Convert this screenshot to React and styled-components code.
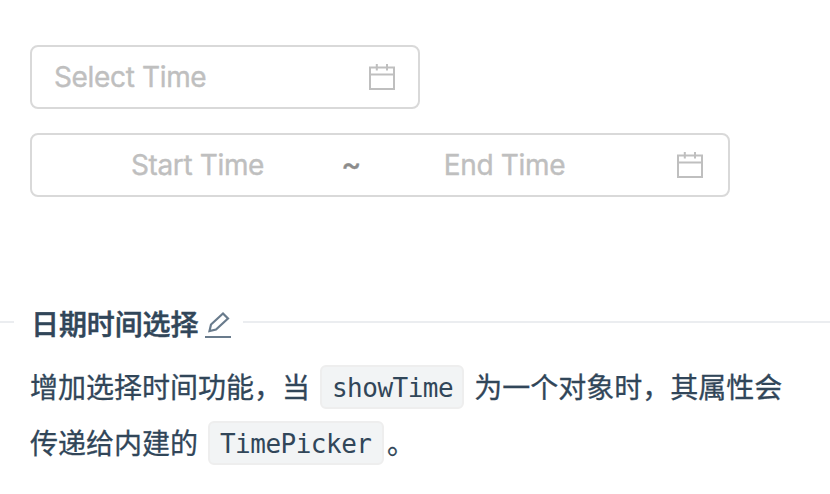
import React from 'react';
import styled, { createGlobalStyle } from 'styled-components';

const Global = createGlobalStyle`
  * { box-sizing: border-box; }
  body { margin: 0; background: #fff; overflow: hidden; }
`;

const Page = styled.main`
  width: 830px;
  height: 494px;
  display: flex;
  flex-direction: column;
  font-family: Inter, "Noto Sans CJK SC", sans-serif;
`;

const Demo = styled.section`
  display: flex;
  flex-direction: column;
  gap: 24px;
  padding: 45px 30px 0;
  height: 304px;
`;

const Picker = styled.div`
  display: flex;
  align-items: center;
  width: ${(p) => p.$width}px;
  height: 64px;
  padding: 0 ${(p) => p.$end}px 0 22px;
  border: 2px solid #d9d9d9;
  border-radius: 8px;
  font-size: 28px;
  letter-spacing: -0.35px;
  line-height: 60px;
  color: #bfbfbf;
  -webkit-text-stroke: 0.4px currentColor;
`;

const Placeholder = styled.span`
  flex: none;
  width: ${(p) => p.$width || 'auto'};
  text-align: ${(p) => p.$align || 'left'};
  white-space: nowrap;
`;

const Separator = styled.span`
  flex: none;
  width: 20px;
  text-align: center;
  font-family: Roboto, sans-serif;
  font-weight: 500;
  color: #8c8c8c;
`;

const CalendarSvg = styled.svg`
  flex: none;
  display: block;
  margin-left: auto;
`;

const TitleRow = styled.div`
  display: flex;
  align-items: center;
  height: 42px;
`;

const Rule = styled.span`
  height: 2px;
  margin-top: -6px;
  background: #ebedf0;
  width: ${(p) => p.$width || 'auto'};
  flex: ${(p) => (p.$width ? 'none' : 1)};
`;

const Title = styled.h3`
  display: flex;
  align-items: center;
  margin: 0;
  padding: 0 12px 0 17px;
  gap: 7px;
  font-family: "Noto Sans CJK SC", sans-serif;
  font-size: 28px;
  line-height: 38px;
  font-weight: 500;
  color: #314659;
  -webkit-text-stroke: 0.5px currentColor;
`;

const TitleText = styled.span`
  padding-bottom: 4px;
  letter-spacing: -0.1px;
`;

const Description = styled.p`
  margin: 15px 30px 0;
  font-family: Roboto, "Noto Sans CJK SC", sans-serif;
  font-size: 28px;
  line-height: 56px;
  color: #314659;
  white-space: nowrap;
  -webkit-text-stroke: 0.3px currentColor;
`;

const Code = styled.code`
  display: inline-block;
  height: 44px;
  padding: 0 ${(p) => p.$end}px 0 10px;
  margin: 0 3px;
  border: 2px solid #eee;
  border-radius: 6px;
  background: #f2f4f5;
  font: 26px/42px "DejaVu Sans Mono", monospace;
  letter-spacing: -0.5px;
  vertical-align: 1px;
  -webkit-text-stroke: 0;
`;

const CalendarIcon = () => (
  <CalendarSvg width="26" height="26" viewBox="0 0 26 26" fill="none" stroke="#bfbfbf" strokeWidth="2">
    <path d="M1 3.5H25V25H1ZM1 10.5H25M7.8 0V6.5M18 0V6.5" />
  </CalendarSvg>
);

const EditIcon = () => (
  <svg width="26" height="28" viewBox="0 0 26 28" fill="none" stroke="#697b8c" strokeWidth="2.2">
    <path d="M0 26H26M4.5 20L6 13.5L18 2.5L23 7.5L11 18.5Z" />
  </svg>
);

export default function App() {
  return (
    <Page>
      <Global />
      <Demo>
        <Picker $width={390} $end={23}>
          <Placeholder>Select Time</Placeholder>
          <CalendarIcon />
        </Picker>
        <Picker $width={700} $end={25}>
          <Placeholder $width="287px" $align="center">Start Time</Placeholder>
          <Separator>~</Separator>
          <Placeholder $width="287px" $align="center">End Time</Placeholder>
          <CalendarIcon />
        </Picker>
      </Demo>
      <TitleRow>
        <Rule $width="14px" />
        <Title><TitleText>日期时间选择</TitleText><EditIcon /></Title>
        <Rule />
      </TitleRow>
      <Description>
        增加选择时间功能，当 <Code $end={9}>showTime</Code> 为一个对象时，其属性会
        <br />
        传递给内建的 <Code $end={10.5}>TimePicker</Code>。
      </Description>
    </Page>
  );
}
